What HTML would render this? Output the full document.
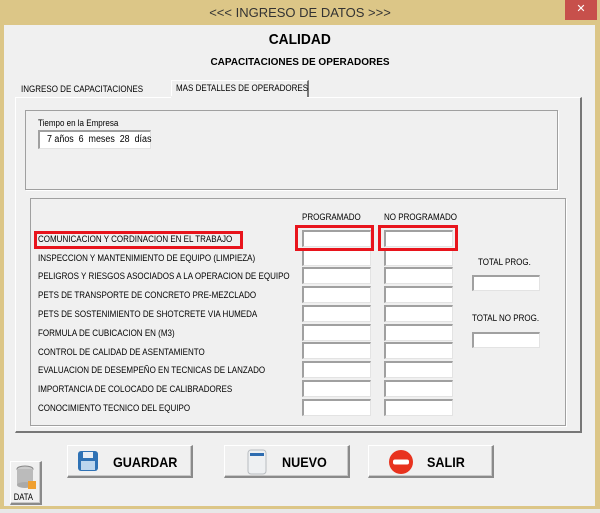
<!DOCTYPE html>
<html><head><style>
*{margin:0;padding:0;box-sizing:border-box}
body{width:600px;height:513px;background:#dcc687;position:relative;overflow:hidden;font-family:"Liberation Sans",sans-serif;color:#000}
.a{position:absolute}
.t{position:absolute;font-size:9px;white-space:nowrap;transform:scaleX(.89);transform-origin:left center;line-height:10px}
.tb{position:absolute;background:#fff;border-top:2px solid #a0a0a0;border-left:2px solid #a0a0a0;border-right:1px solid #e3e3e3;border-bottom:1px solid #e3e3e3}
.red{position:absolute;border:3px solid #e8141c}
.btn{position:absolute;background:#f0f0f0;border:1px solid #fff;border-right:2px solid #8a8a8a;border-bottom:2px solid #8a8a8a;box-shadow:inset -1px -1px 0 #c8c8c8}
.bl{position:absolute;font-weight:bold;font-size:14px;top:8px;transform:scaleX(.9);transform-origin:left center}
</style></head><body>
<div class="a" style="left:0;top:0;width:600px;height:24px;text-align:center;font-size:13px;line-height:26px;color:#333">&lt;&lt;&lt; INGRESO DE DATOS &gt;&gt;&gt;</div>
<div class="a" style="left:565px;top:0;width:32px;height:20px;background:#c7504b;color:#fff;font-size:11px;text-align:center;line-height:18px">✕</div>
<div class="a" style="left:4px;top:25px;width:591px;height:481px;background:#f0f0f0"></div>
<div class="a" style="left:0;top:31px;width:600px;text-align:center;font-weight:bold;font-size:15px"><span style="display:inline-block;transform:scaleX(.92)">CALIDAD</span></div>
<div class="a" style="left:0;top:57px;width:600px;text-align:center;font-weight:bold;font-size:10px">CAPACITACIONES DE OPERADORES</div>
<div class="t" style="left:21px;top:84px">INGRESO DE CAPACITACIONES</div>
<div class="a" style="left:171px;top:80px;width:138px;height:18px;border-top:1px solid #fff;border-left:1px solid #fff;border-right:2px solid #777;background:#f0f0f0"></div>
<div class="t" style="left:176px;top:83px">MAS DETALLES DE OPERADORES</div>
<div class="a" style="left:15px;top:97px;width:567px;height:336px;border-top:1px solid #fff;border-left:1px solid #fff;border-right:2px solid #777;border-bottom:2px solid #777"></div>
<div class="a" style="left:171px;top:96px;width:136px;height:3px;background:#f0f0f0"></div>
<div class="a" style="left:25px;top:110px;width:533px;height:80px;border:1px solid #a0a0a0;box-shadow:1px 1px 0 #fff"></div>
<div class="t" style="left:38px;top:118px">Tiempo en la Empresa</div>
<div class="tb" style="left:38px;top:130px;width:113px;height:19px"></div>
<div class="t" style="left:47px;top:135px;font-size:10px">7 años &nbsp;6 &nbsp;meses &nbsp;28 &nbsp;días</div>
<div class="a" style="left:30px;top:198px;width:536px;height:228px;border:1px solid #a0a0a0;box-shadow:1px 1px 0 #fff"></div>
<div class="t" style="left:302px;top:212px">PROGRAMADO</div>
<div class="t" style="left:384px;top:212px">NO PROGRAMADO</div>
<div class="t" style="left:38px;top:234px">COMUNICACION Y CORDINACION EN EL TRABAJO</div>
<div class="t" style="left:38px;top:253px">INSPECCION Y MANTENIMIENTO DE EQUIPO (LIMPIEZA)</div>
<div class="t" style="left:38px;top:271px">PELIGROS Y RIESGOS ASOCIADOS A LA OPERACION DE EQUIPO</div>
<div class="t" style="left:38px;top:290px">PETS DE TRANSPORTE DE CONCRETO PRE-MEZCLADO</div>
<div class="t" style="left:38px;top:309px">PETS DE SOSTENIMIENTO DE SHOTCRETE VIA HUMEDA</div>
<div class="t" style="left:38px;top:328px">FORMULA DE CUBICACION EN (M3)</div>
<div class="t" style="left:38px;top:347px">CONTROL DE CALIDAD DE ASENTAMIENTO</div>
<div class="t" style="left:38px;top:365px">EVALUACION DE DESEMPEÑO EN TECNICAS DE LANZADO</div>
<div class="t" style="left:38px;top:384px">IMPORTANCIA DE COLOCADO DE CALIBRADORES</div>
<div class="t" style="left:38px;top:403px">CONOCIMIENTO TECNICO DEL EQUIPO</div>
<div class="tb" style="left:302px;top:230px;width:69px;height:17px"></div><div class="tb" style="left:384px;top:230px;width:69px;height:17px"></div>
<div class="tb" style="left:302px;top:249px;width:69px;height:17px"></div><div class="tb" style="left:384px;top:249px;width:69px;height:17px"></div>
<div class="tb" style="left:302px;top:267px;width:69px;height:17px"></div><div class="tb" style="left:384px;top:267px;width:69px;height:17px"></div>
<div class="tb" style="left:302px;top:286px;width:69px;height:17px"></div><div class="tb" style="left:384px;top:286px;width:69px;height:17px"></div>
<div class="tb" style="left:302px;top:305px;width:69px;height:17px"></div><div class="tb" style="left:384px;top:305px;width:69px;height:17px"></div>
<div class="tb" style="left:302px;top:324px;width:69px;height:17px"></div><div class="tb" style="left:384px;top:324px;width:69px;height:17px"></div>
<div class="tb" style="left:302px;top:342px;width:69px;height:17px"></div><div class="tb" style="left:384px;top:342px;width:69px;height:17px"></div>
<div class="tb" style="left:302px;top:361px;width:69px;height:17px"></div><div class="tb" style="left:384px;top:361px;width:69px;height:17px"></div>
<div class="tb" style="left:302px;top:380px;width:69px;height:17px"></div><div class="tb" style="left:384px;top:380px;width:69px;height:17px"></div>
<div class="tb" style="left:302px;top:399px;width:69px;height:17px"></div><div class="tb" style="left:384px;top:399px;width:69px;height:17px"></div>
<div class="red" style="left:34px;top:231px;width:209px;height:18px"></div>
<div class="red" style="left:295px;top:225px;width:79px;height:26px"></div>
<div class="red" style="left:378px;top:225px;width:80px;height:26px"></div>
<div class="t" style="left:478px;top:257px">TOTAL PROG.</div>
<div class="tb" style="left:472px;top:275px;width:68px;height:16px"></div>
<div class="t" style="left:472px;top:313px">TOTAL NO PROG.</div>
<div class="tb" style="left:472px;top:332px;width:68px;height:16px"></div>
<div class="btn" style="left:67px;top:445px;width:126px;height:33px">
<svg class="a" style="left:9px;top:4px" width="22" height="22" viewBox="0 0 22 22"><rect x="1" y="1" width="20" height="20" rx="3" fill="#2f72b5"/><rect x="6" y="2" width="10" height="6" fill="#e8eef5"/><rect x="4" y="11" width="14" height="9" fill="#bcd6ee"/></svg>
<div class="bl" style="left:45px">GUARDAR</div></div>
<div class="btn" style="left:224px;top:445px;width:126px;height:33px">
<svg class="a" style="left:22px;top:3px" width="20" height="26" viewBox="0 0 20 26"><rect x="1" y="1" width="18" height="24" rx="3" fill="#eef0f2" stroke="#b8bcc0"/><rect x="3" y="4" width="14" height="3" fill="#2e6cb0"/></svg>
<div class="bl" style="left:57px">NUEVO</div></div>
<div class="btn" style="left:368px;top:445px;width:126px;height:33px">
<svg class="a" style="left:19px;top:3px" width="26" height="26" viewBox="0 0 26 26"><circle cx="13" cy="13" r="12" fill="#e8321e"/><rect x="5" y="10.5" width="16" height="5" rx="2" fill="#fff"/></svg>
<div class="bl" style="left:58px">SALIR</div></div>
<div class="btn" style="left:10px;top:461px;width:32px;height:44px">
<svg class="a" style="left:4px;top:2px" width="22" height="28" viewBox="0 0 22 28"><ellipse cx="10" cy="5" rx="8" ry="3" fill="#ccc" stroke="#888"/><rect x="2" y="5" width="16" height="16" fill="#bbb"/><ellipse cx="10" cy="21" rx="8" ry="3" fill="#aaa"/><rect x="13" y="17" width="8" height="8" fill="#f0a030"/></svg>
<div class="a" style="left:1px;top:30px;font-size:9px;transform:scaleX(.85)">DATA</div></div>
<div class="a" style="left:0;top:509px;width:600px;height:4px;background:#e8e8e8"></div>
</body></html>
